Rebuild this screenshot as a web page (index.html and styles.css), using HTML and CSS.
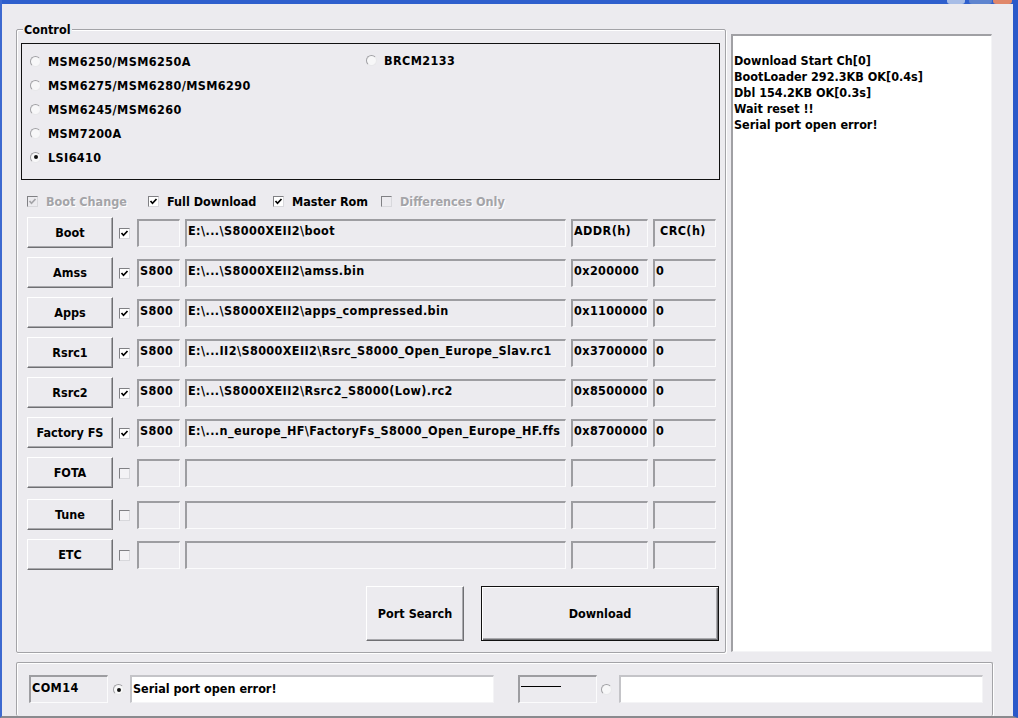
FILE: index.html
```html
<!DOCTYPE html>
<html>
<head>
<meta charset="utf-8">
<title>Downloader</title>
<link rel="stylesheet" href="styles.css">
</head>
<body>
<div class="frame">
  <div class="titlebar">
    <span class="tb tb-min"></span>
    <span class="tb tb-max"></span>
    <span class="tb tb-close"></span>
  </div>
  <div class="body">
    <div class="main">
      <div class="group control">
        <span class="group-title">Control</span>
        <div class="chips">
          <div class="col">
            <label class="opt"><span class="radio"></span>MSM6250/MSM6250A</label>
            <label class="opt"><span class="radio"></span>MSM6275/MSM6280/MSM6290</label>
            <label class="opt"><span class="radio"></span>MSM6245/MSM6260</label>
            <label class="opt"><span class="radio"></span>MSM7200A</label>
            <label class="opt"><span class="radio on"></span>LSI6410</label>
          </div>
          <div class="col col-right">
            <label class="opt"><span class="radio"></span>BRCM2133</label>
          </div>
        </div>
        <div class="checks">
          <label class="chk disabled"><span class="box on dis"><svg viewBox="0 0 9 9"><polyline points="1.5,4 3.5,6.3 7.5,2"/></svg></span>Boot Change</label>
          <label class="chk"><span class="box on"><svg viewBox="0 0 9 9"><polyline points="1.5,4 3.5,6.3 7.5,2"/></svg></span>Full Download</label>
          <label class="chk"><span class="box on"><svg viewBox="0 0 9 9"><polyline points="1.5,4 3.5,6.3 7.5,2"/></svg></span>Master Rom</label>
          <label class="chk disabled"><span class="box dis"></span>Differences Only</label>
        </div>
        <div class="rows">
          <div class="row">
            <button class="btn">Boot</button>
            <span class="box on rowchk"><svg viewBox="0 0 9 9"><polyline points="1.5,4 3.5,6.3 7.5,2"/></svg></span>
            <span class="fld f-pre"></span>
            <span class="fld f-path">E:\...\S8000XEII2\boot</span>
            <span class="fld f-addr">ADDR(h)</span>
            <span class="fld f-crc f-head">CRC(h)</span>
          </div>
          <div class="row">
            <button class="btn">Amss</button>
            <span class="box on rowchk"><svg viewBox="0 0 9 9"><polyline points="1.5,4 3.5,6.3 7.5,2"/></svg></span>
            <span class="fld f-pre">S800</span>
            <span class="fld f-path">E:\...\S8000XEII2\amss.bin</span>
            <span class="fld f-addr">0x200000</span>
            <span class="fld f-crc">0</span>
          </div>
          <div class="row">
            <button class="btn">Apps</button>
            <span class="box on rowchk"><svg viewBox="0 0 9 9"><polyline points="1.5,4 3.5,6.3 7.5,2"/></svg></span>
            <span class="fld f-pre">S800</span>
            <span class="fld f-path">E:\...\S8000XEII2\apps_compressed.bin</span>
            <span class="fld f-addr">0x1100000</span>
            <span class="fld f-crc">0</span>
          </div>
          <div class="row">
            <button class="btn">Rsrc1</button>
            <span class="box on rowchk"><svg viewBox="0 0 9 9"><polyline points="1.5,4 3.5,6.3 7.5,2"/></svg></span>
            <span class="fld f-pre">S800</span>
            <span class="fld f-path">E:\...II2\S8000XEII2\Rsrc_S8000_Open_Europe_Slav.rc1</span>
            <span class="fld f-addr">0x3700000</span>
            <span class="fld f-crc">0</span>
          </div>
          <div class="row">
            <button class="btn">Rsrc2</button>
            <span class="box on rowchk"><svg viewBox="0 0 9 9"><polyline points="1.5,4 3.5,6.3 7.5,2"/></svg></span>
            <span class="fld f-pre">S800</span>
            <span class="fld f-path">E:\...\S8000XEII2\Rsrc2_S8000(Low).rc2</span>
            <span class="fld f-addr">0x8500000</span>
            <span class="fld f-crc">0</span>
          </div>
          <div class="row">
            <button class="btn">Factory FS</button>
            <span class="box on rowchk"><svg viewBox="0 0 9 9"><polyline points="1.5,4 3.5,6.3 7.5,2"/></svg></span>
            <span class="fld f-pre">S800</span>
            <span class="fld f-path">E:\...n_europe_HF\FactoryFs_S8000_Open_Europe_HF.ffs</span>
            <span class="fld f-addr">0x8700000</span>
            <span class="fld f-crc">0</span>
          </div>
          <div class="row">
            <button class="btn">FOTA</button>
            <span class="box rowchk"></span>
            <span class="fld f-pre"></span>
            <span class="fld f-path"></span>
            <span class="fld f-addr"></span>
            <span class="fld f-crc"></span>
          </div>
          <div class="row row-gap">
            <button class="btn">Tune</button>
            <span class="box rowchk"></span>
            <span class="fld f-pre"></span>
            <span class="fld f-path"></span>
            <span class="fld f-addr"></span>
            <span class="fld f-crc"></span>
          </div>
          <div class="row">
            <button class="btn">ETC</button>
            <span class="box rowchk"></span>
            <span class="fld f-pre"></span>
            <span class="fld f-path"></span>
            <span class="fld f-addr"></span>
            <span class="fld f-crc"></span>
          </div>
        </div>
        <div class="actions">
          <button class="btn btn-port">Port Search</button>
          <button class="btn btn-dl">Download</button>
        </div>
      </div>
      <div class="log">
        <div>Download Start Ch[0]</div>
        <div>BootLoader 292.3KB OK[0.4s]</div>
        <div>Dbl 154.2KB OK[0.3s]</div>
        <div>Wait reset !!</div>
        <div>Serial port open error!</div>
      </div>
    </div>
    <div class="group status">
      <span class="fld s-port">COM14</span>
      <span class="radio s-radio on"></span>
      <span class="msg">Serial port open error!</span>
      <span class="fld s-port s-port2"><span class="dash"></span></span>
      <span class="radio s-radio s-radio2"></span>
      <span class="msg"></span>
    </div>
  </div>
</div>
</body>
</html>
```
FILE: styles.css
```css
html, body {
  margin: 0;
  padding: 0;
  background: #ecebef;
}
body {
  font-family: "DejaVu Sans Condensed", "DejaVu Sans", Verdana, sans-serif;
  font-stretch: condensed;
  font-weight: bold;
  font-size: 12.5px;
  color: #000;
}
.frame {
  width: 1018px;
  height: 718px;
  box-sizing: border-box;
  background: #ecebef;
  border-left: 2px solid #3d69d0;
  border-right: 5px solid #2b59c9;
  border-bottom: 2px solid #8a8a8e;
  display: flex;
  flex-direction: column;
  overflow: hidden;
}
.titlebar {
  height: 4px;
  flex: none;
  background: #2e5fcd;
  display: flex;
  justify-content: flex-end;
  align-items: flex-start;
  padding-right: 1px;
}
.tb {
  height: 4px;
  border-radius: 0 0 3px 3px;
}
.tb-min { width: 18px; background: #a8bde6; margin-right: 4px; }
.tb-max { width: 23px; background: #5e84cf; margin-right: 1px; }
.tb-close { width: 19px; background: #e0876a; }

.body {
  flex: 1;
  padding-left: 14px;
  display: flex;
  flex-direction: column;
}
.main {
  display: flex;
  align-items: flex-start;
  gap: 5px;
}
.group {
  position: relative;
  box-sizing: border-box;
  border: 1px solid #a3a3a7;
  border-radius: 2px;
  box-shadow: inset 1px 1px 0 #fff, 1px 1px 0 #fff;
}
.group-title {
  position: absolute;
  top: -8px;
  left: 6px;
  padding: 0 1px;
  line-height: 15px;
  background: #ecebef;
}
.control {
  margin-top: 25px;
  width: 710px;
  height: 624px;
  padding: 13px 0 0 4px;
  display: flex;
  flex-direction: column;
}
.chips {
  width: 699px;
  height: 137px;
  box-sizing: border-box;
  border: 1px solid #111;
  padding: 5px 0 0 8px;
  display: grid;
  grid-template-columns: 336px 1fr;
}
.col {
  display: flex;
  flex-direction: column;
}
.col-right {
  margin-top: -1px;
}
.opt {
  height: 24px;
  display: flex;
  align-items: center;
  gap: 7px;
  letter-spacing: 0.4px;
}
.radio {
  width: 11px;
  height: 11px;
  box-sizing: border-box;
  border-radius: 50%;
  border: 1px solid;
  border-color: #a0a0a4 #e8e8ea #e8e8ea #a0a0a4;
  background: #f7f7f8;
  display: inline-flex;
  align-items: center;
  justify-content: center;
  flex: none;
}
.radio.on::after {
  content: "";
  width: 4px;
  height: 4px;
  border-radius: 50%;
  background: #111;
}
.checks {
  margin: 13px 0 0 6px;
  height: 16px;
  display: grid;
  grid-template-columns: 121px 125px 108px auto;
}
.chk {
  display: flex;
  align-items: center;
  gap: 8px;
}
.chk.disabled {
  color: #a4a4a8;
  text-shadow: 1px 1px 0 #fff;
}
.box {
  width: 11px;
  height: 11px;
  box-sizing: border-box;
  border: 1px solid;
  border-color: #808084 #d8d8dc #d8d8dc #808084;
  background: #fff;
  display: inline-flex;
  flex: none;
}
.box svg {
  width: 9px;
  height: 9px;
}
.box polyline {
  fill: none;
  stroke: #000;
  stroke-width: 1.7;
}
.box.dis {
  background: #ecebef;
}
.box.dis polyline {
  stroke: #a4a4a8;
}
.rows {
  margin: 8px 0 0 6px;
  display: flex;
  flex-direction: column;
  gap: 9px;
}
.row {
  height: 31px;
  display: flex;
  align-items: center;
}
.row-gap {
  margin-top: 2px;
}
.btn {
  font: inherit;
  color: #000;
  background: #ecebef;
  border: 1px solid;
  border-color: #fff #6f6f73 #6f6f73 #fff;
  box-shadow: inset -1px -1px 0 #a9a9ad;
  padding: 0;
  margin: 0;
  box-sizing: border-box;
}
.row .btn {
  width: 86px;
  height: 31px;
}
.rowchk {
  margin: 2px 0 0 6px;
  background: #f3f2f5;
}
.rowchk.on {
  background: #fff;
}
.fld {
  box-sizing: border-box;
  height: 28px;
  border-top: 2px solid #9d9da1;
  border-left: 2px solid #9d9da1;
  border-right: 1px solid #fbfbfc;
  border-bottom: 1px solid #fbfbfc;
  padding: 2px 0 0 1px;
  line-height: 16px;
  letter-spacing: 0.4px;
  white-space: nowrap;
  overflow: hidden;
}
.f-pre { width: 43px; margin-left: 7px; }
.f-path { width: 381px; margin-left: 5px; }
.f-addr { width: 77px; margin-left: 5px; }
.f-crc { width: 63px; margin-left: 5px; }
.f-head { padding-left: 5px; }
.actions {
  margin-top: 16px;
  padding-right: 6px;
  display: flex;
  justify-content: flex-end;
  gap: 17px;
}
.btn-port {
  width: 98px;
  height: 55px;
}
.btn-dl {
  width: 238px;
  height: 55px;
  border: 1px solid #111;
  box-shadow: inset 1px 1px 0 #fff, inset -1px -1px 0 #6f6f73, inset -2px -2px 0 #a9a9ad;
}
.log {
  margin-top: 30px;
  width: 261px;
  height: 618px;
  box-sizing: border-box;
  background: #fff;
  border-top: 2px solid #a0a0a4;
  border-left: 2px solid #a0a0a4;
  border-right: 1px solid #f4f4f6;
  border-bottom: 1px solid #f4f4f6;
  padding: 17px 0 0 1px;
  line-height: 16px;
}
.status {
  margin-top: 9px;
  width: 977px;
  flex: 1;
  border-bottom: none;
  padding: 12px 0 0 12px;
  display: flex;
  align-items: flex-start;
}
.s-port {
  width: 79px;
  padding-top: 3px;
}
.s-radio {
  margin: 9px 0 0 5px;
}
.s-radio2 {
  margin-left: 4px;
  margin-right: 1px;
}
.msg {
  width: 364px;
  height: 28px;
  box-sizing: border-box;
  margin-left: 6px;
  background: #fff;
  border-top: 2px solid #c4c4c8;
  border-left: 2px solid #c4c4c8;
  border-right: 1px solid #f4f4f6;
  border-bottom: 1px solid #f4f4f6;
  padding: 4px 0 0 1px;
  line-height: 16px;
}
.s-port2 {
  margin-left: 24px;
  padding-top: 9px;
}
.dash {
  display: block;
  width: 40px;
  border-top: 1px solid #000;
}
```
